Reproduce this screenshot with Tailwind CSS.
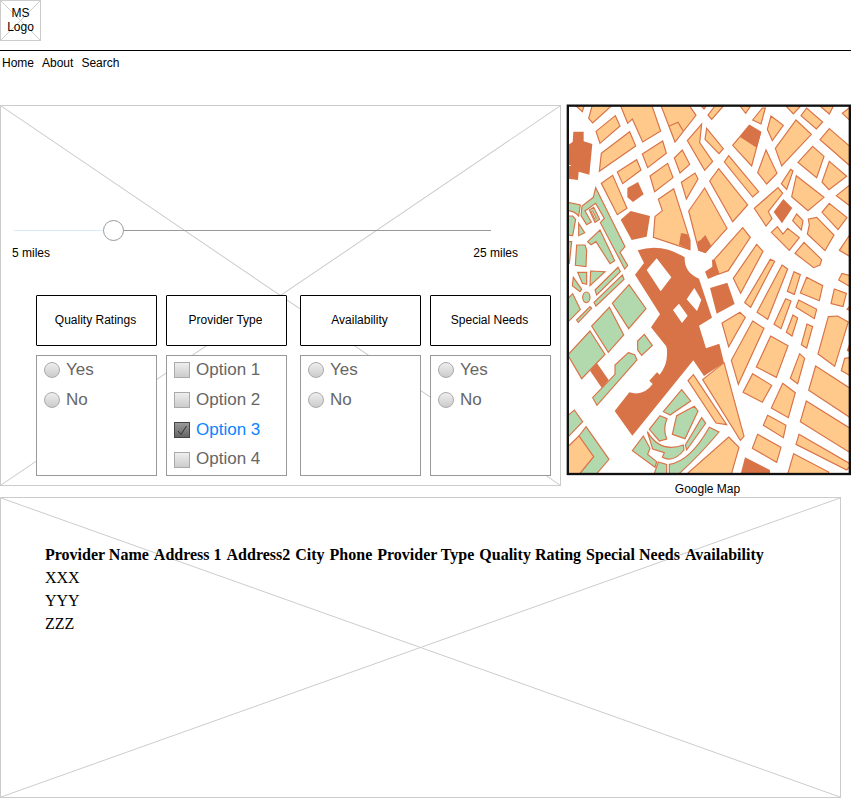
<!DOCTYPE html>
<html lang="en">
<head>
<meta charset="utf-8">
<meta name="viewport" content="width=device-width, initial-scale=1">
<title>Provider Search</title>
<script src="https://cdn.jsdelivr.net/npm/@tailwindcss/browser@4"></script>
</head>
<body class="bg-white pr-px font-['Liberation_Sans',Arial,sans-serif] text-xs text-black">

<header>
  <a href="#" class="relative flex size-[41px] items-center justify-center border border-[#ccc] pb-0.5 text-center leading-[14px]">
    <svg class="absolute inset-0 size-full" viewBox="0 0 100 100" preserveAspectRatio="none" stroke="#ccc" aria-hidden="true"><path d="M0 0L100 100M100 0L0 100" vector-effect="non-scaling-stroke"/></svg>
    <span class="relative">MS<br>Logo</span>
  </a>
  <nav class="mt-[9px] flex gap-2 border-t border-black px-0.5 pt-1 leading-4">
    <a href="#">Home</a><a href="#">About</a><a href="#">Search</a>
  </nav>
</header>

<main class="mt-[34px]">
  <div class="grid grid-cols-[561fr_285fr] items-start gap-[5px]">
    <form class="relative border border-[#ccc] pb-[9px]">
      <svg class="absolute inset-0 size-full" viewBox="0 0 100 100" preserveAspectRatio="none" stroke="#ccc" aria-hidden="true"><path d="M0 0L100 100M100 0L0 100" vector-effect="non-scaling-stroke"/></svg>

      <div class="relative pt-[114px] pl-[13px] pr-[69px]">
        <input type="range" min="5" max="25" step="0.1" value="8.9" aria-label="Distance in miles" class="block h-[21px] w-full appearance-none bg-[linear-gradient(to_right,#d6ecfb_20%,#999_20%)] bg-[length:100%_1px] bg-center bg-no-repeat [&::-webkit-slider-thumb]:size-[21px] [&::-webkit-slider-thumb]:appearance-none [&::-webkit-slider-thumb]:rounded-full [&::-webkit-slider-thumb]:border [&::-webkit-slider-thumb]:border-[#999] [&::-webkit-slider-thumb]:bg-white">
      </div>
      <div class="relative mt-1 flex justify-between pl-[11px] pr-[42px] leading-4">
        <span>5 miles</span><span>25 miles</span>
      </div>

      <div class="relative mt-[34px] grid grid-cols-2 gap-x-[13px] pl-[35px] pr-[9px] [&_button]:pr-0.5 [&_button]:pb-0.5 [&_label]:pb-0.5">
        <div class="grid grid-cols-2 gap-[9px]">
          <button type="button" class="h-[51px] rounded-[1px] border border-black bg-white">Quality Ratings</button>
          <button type="button" class="h-[51px] rounded-[1px] border border-black bg-white">Provider Type</button>
          <div class="min-h-[121px] border border-[#999] bg-white pl-[7px] text-[17px] text-[#666]">
            <label class="flex h-[30px] items-center gap-1.5"><input type="radio" name="quality" class="size-4 appearance-none rounded-full border border-[#aaa] bg-linear-to-b from-[#eee] to-[#ccc]">Yes</label>
            <label class="flex h-[30px] items-center gap-1.5"><input type="radio" name="quality" class="size-4 appearance-none rounded-full border border-[#aaa] bg-linear-to-b from-[#eee] to-[#ccc]">No</label>
          </div>
          <div class="min-h-[121px] border border-[#999] bg-white pl-[7px] text-[17px] text-[#666]">
            <label class="flex h-[30px] items-center gap-1.5"><input type="checkbox" class="size-4 appearance-none border border-[#aaa] bg-linear-to-b from-[#eee] to-[#ccc]">Option 1</label>
            <label class="flex h-[30px] items-center gap-1.5"><input type="checkbox" class="size-4 appearance-none border border-[#aaa] bg-linear-to-b from-[#eee] to-[#ccc]">Option 2</label>
            <label class="flex h-[30px] items-center gap-1.5 text-[#0a84ff]"><span class="relative size-4"><input type="checkbox" checked class="block size-4 appearance-none border border-[#444] bg-linear-to-b from-[#999] to-[#666]"><svg class="pointer-events-none absolute inset-0" viewBox="0 0 16 16" fill="none" stroke="#333" aria-hidden="true"><path d="M4 9L7 12.500L12.500 4"/></svg></span>Option 3</label>
            <label class="flex h-[29px] items-center gap-1.5"><input type="checkbox" class="size-4 appearance-none border border-[#aaa] bg-linear-to-b from-[#eee] to-[#ccc]">Option 4</label>
          </div>
        </div>
        <div class="grid grid-cols-2 gap-[9px]">
          <button type="button" class="h-[51px] rounded-[1px] border border-black bg-white">Availability</button>
          <button type="button" class="h-[51px] rounded-[1px] border border-black bg-white">Special Needs</button>
          <div class="min-h-[121px] border border-[#999] bg-white pl-[7px] text-[17px] text-[#666]">
            <label class="flex h-[30px] items-center gap-1.5"><input type="radio" name="availability" class="size-4 appearance-none rounded-full border border-[#aaa] bg-linear-to-b from-[#eee] to-[#ccc]">Yes</label>
            <label class="flex h-[30px] items-center gap-1.5"><input type="radio" name="availability" class="size-4 appearance-none rounded-full border border-[#aaa] bg-linear-to-b from-[#eee] to-[#ccc]">No</label>
          </div>
          <div class="min-h-[121px] border border-[#999] bg-white pl-[7px] text-[17px] text-[#666]">
            <label class="flex h-[30px] items-center gap-1.5"><input type="radio" name="needs" class="size-4 appearance-none rounded-full border border-[#aaa] bg-linear-to-b from-[#eee] to-[#ccc]">Yes</label>
            <label class="flex h-[30px] items-center gap-1.5"><input type="radio" name="needs" class="size-4 appearance-none rounded-full border border-[#aaa] bg-linear-to-b from-[#eee] to-[#ccc]">No</label>
          </div>
        </div>
      </div>
    </form>

    <figure class="-mt-px">
      <svg class="block h-auto w-full" viewBox="18 12 855 1116" role="img" aria-label="City map">
        <defs><clipPath id="frame"><rect x="24" y="17" width="845" height="1105"/></clipPath></defs>
        <g clip-path="url(#frame)" stroke="#d87347" stroke-width="3.500">
          <!-- north-west blocks -->
          <path fill="#ffc98c" d="M45 15L67 35L73 15ZM97 15L86 55L98 69L154 18ZM108 94L166 47L180 78L120 130ZM124 160L209 95L227 138L118 214ZM172 216L230 179L243 210L188 251ZM182 18L203 70L217 57L248 126L302 93L274 12ZM302 14L345 126L408 46L385 12ZM247 162L308 123L319 160L263 203ZM343 174L367 150L389 193L360 219ZM270 228L323 190L339 233L284 275ZM364 247L405 219L414 237L379 297ZM124 250L158 226L201 325L172 344ZM295 298L341 266L390 420L390 449L280 412L285 350L307 332ZM434 264L386 333L416 450L436 458L501 385ZM382 122L425 72L419 128L458 184L434 211Z"/>
          <path fill="none" d="M326 79L354 67L370 93"/>
          <path fill="#d87347" stroke="none" d="M40 95H71V124L97 132L88 224L56 215L54 240L22 236V198H32V195H22V136L38 126ZM202 264L234 246L251 283L219 306L202 292ZM182 359L212 333L270 348L260 410L215 420ZM357 434L363 399L382 403L390 420V450ZM415 452L412 425L422 420L436 405L454 438L437 458Z"/>
          <!-- north-east blocks -->
          <g transform="translate(420 0)">
            <path fill="#ffc98c" d="M4 18L12 27L18 18ZM20 85L70 146L57 161L15 118ZM24 45L35 58L70 18H45ZM120 18L137 40L152 18ZM187 24L158 60L183 72L196 24ZM213 48L250 76L217 122L202 88ZM288 60L334 103L245 198L226 145ZM258 18L280 42L302 18ZM320 24L303 47L349 87L368 66ZM360 18L388 42L400 18ZM455 18L427 40L455 66ZM388 86L455 144V202L360 119ZM98 136L148 76L182 96L155 198ZM198 150L231 220L200 252L173 218ZM86 167L176 275L158 291L73 186ZM56 206L143 315L98 365L29 243ZM338 139L372 169L350 233L294 187ZM388 184L440 229L387 269L366 246ZM272 208L279 213L260 268L244 251ZM289 227L372 292L324 332L275 290ZM455 250L409 287L455 322ZM234 263L248 280L205 335L216 356L198 378L163 325ZM388 310L441 353L414 389L366 337ZM290 342L309 362L304 390L278 362ZM325 357L350 352L402 405L375 452L322 402L328 375Z"/>
            <path fill="#d87347" stroke="none" d="M148 75L184 97L170 143L120 111ZM250 297L277 324L246 370L221 336Z"/>
          </g>
          <!-- green quarter -->
          <g transform="translate(0 360)" fill="#b2d8ae">
            <path d="M22 -53L61 -45L56 -12Q42 -28 22 -28ZM107 -97L100 -68L66 -42L63 -13L80 14L94 6L75 -27L107 -50L133 -5L121 8L194 147L203 136L180 97L195 80ZM88 -30L101 -38L119 -2L105 7ZM22 -12L38 -12L47 -2L38 47L22 45ZM56 10L74 38L56 47ZM83 65L120 30L164 122L150 131L108 65L93 74ZM50 75H75L80 90L78 140L46 136ZM22 65H35L28 130H22ZM53 157H80V193L67 190ZM92 153L135 155L90 197ZM40 172L65 208L60 215L37 197ZM105 210L174 142L181 155L110 225ZM102 247L187 165L192 178L108 258ZM50 300L90 260L95 265L55 307ZM22 237L38 221L61 268L22 308ZM207 194L258 266L206 326L157 250ZM148 262L191 345L145 397L95 318ZM90 333L135 403L65 476L26 410V402ZM253 343L277 376L245 406L233 390V363Z"/>
            <path fill="#fff" stroke-width="3" d="M94 -25L98 -27L109 -4L105 -2Z"/>
            <ellipse cx="79" cy="232" rx="11" ry="16"/>
          </g>
          <!-- old town -->
          <g transform="translate(0 360)" stroke="none">
            <path fill="#d87347" d="M233 91Q305 68 374 112Q372 158 417 176L456 293L417 317L438 385L478 371L492 428L432 468L400 421L217 647L164 573L208 517Q250 530 278 492L268 482L291 457L299 464Q322 435 321 400Q322 384 318 378L273 322L300 283L225 164L252 129ZM90 452L110 428L146 480L126 505Z"/>
            <path fill="#fff" d="M290 115L334 172L302 214L260 150ZM403 204L424 240L411 273L380 238ZM357 251L383 287L366 309L339 270Z"/>
          </g>
          <!-- eastern blocks -->
          <g transform="translate(420 360)">
            <path fill="#ffc98c" d="M214 37L232 20L249 42L263 25L298 53L268 91ZM128 23L151 52L85 152L57 162L40 122ZM170 73L189 94L122 220L100 175ZM211 118L224 124L152 262L134 248ZM246 135L263 147L203 298L171 277ZM282 155L301 164L283 223L262 214ZM320 172L368 197L358 242L301 219ZM312 67L365 119L360 135L341 143L285 100ZM455 36L418 91L455 113ZM455 168L426 160L416 180L455 203ZM403 207L439 220L429 260L393 251ZM452 255L441 268L452 272ZM296 240L350 268L343 296L288 262ZM257 236L273 243L243 326L222 313ZM279 285L293 294L276 348L259 337ZM321 312L338 320L320 384L304 374ZM385 290L413 288L445 306L404 439L354 402ZM120 277L136 292L86 380L66 309ZM158 303L192 325L115 493L94 421ZM212 348L264 377L229 472L169 441Z"/>
            <path fill="#d87347" stroke="none" d="M30 204L82 188L104 252L50 281ZM36 119H45L58 163L24 177L15 155L37 140Z"/>
          </g>
          <!-- south-east blocks -->
          <g transform="translate(420 720)">
            <path fill="#ffc98c" d="M299 41L314 55L293 131L271 115ZM347 78L455 148V236L326 151ZM319 183L455 268V341L301 245ZM297 283L455 374L440 390L288 313ZM281 341L386 396V406H262ZM158 101L215 136L187 187L129 157ZM248 130L286 158L265 233L214 204ZM203 226L258 256L250 293L190 256ZM173 283L243 322L230 367L157 325ZM72 68L132 289L121 301L8 119ZM-20 104L80 254L48 249L-36 122ZM86 291L117 322L93 406H-44ZM455 52L434 55L424 92L455 110Z"/>
            <path fill="#d87347" stroke="none" d="M135 352L210 390V406H121ZM440 32L448 10V36Z"/>
          </g>
          <!-- southern park -->
          <g transform="translate(0 720)">
            <path fill="#b2d8ae" d="M205 38L224 44L231 60L111 196L98 173L165 103V75ZM22 228L43 210L68 245L22 293ZM78 260L147 358L106 406H55L100 350L57 288ZM365 149L392 183L330 225L310 215ZM403 199L414 213L375 296L337 283L350 227ZM300 227L321 236Q308 265 320 297L298 303L268 268ZM262 275Q300 340 370 315L372 330Q340 370 307 352L313 338L278 327ZM425 233L437 250L380 330L376 315ZM250 288L270 325L263 343L290 365L285 382L217 332ZM295 366L320 373V406H281ZM328 373Q390 365 448 262L477 276Q420 345 352 406H328Z"/>
            <path fill="#ffc98c" d="M57 288L101 350L55 406H22V322Z"/>
          </g>
        </g>
        <rect x="23.500" y="17" width="846" height="1105" fill="none" stroke="#111" stroke-width="7"/>
      </svg>
      <figcaption class="mt-[5px] pr-0.5 text-center leading-4">Google Map</figcaption>
    </figure>
  </div>

  <section class="relative mr-[10px] min-h-[301px] border border-[#ccc] pt-[45px] pl-[42px]" aria-label="Providers">
    <svg class="absolute inset-0 size-full" viewBox="0 0 100 100" preserveAspectRatio="none" stroke="#ccc" aria-hidden="true"><path d="M0 0L100 100M100 0L0 100" vector-effect="non-scaling-stroke"/></svg>
    <table class="relative text-left font-['Liberation_Serif','Times_New_Roman',serif] text-base leading-[23px] whitespace-nowrap [&_td]:pr-[3px] [&_td]:pl-0.5 [&_th]:pr-[3px] [&_th]:pl-0.5">
      <thead><tr><th>Provider Name</th><th>Address 1</th><th>Address2</th><th>City</th><th>Phone</th><th>Provider Type</th><th>Quality Rating</th><th>Special Needs</th><th>Availability</th></tr></thead>
      <tbody>
        <tr><td>XXX</td></tr>
        <tr><td>YYY</td></tr>
        <tr><td>ZZZ</td></tr>
      </tbody>
    </table>
  </section>
</main>
</body>
</html>
